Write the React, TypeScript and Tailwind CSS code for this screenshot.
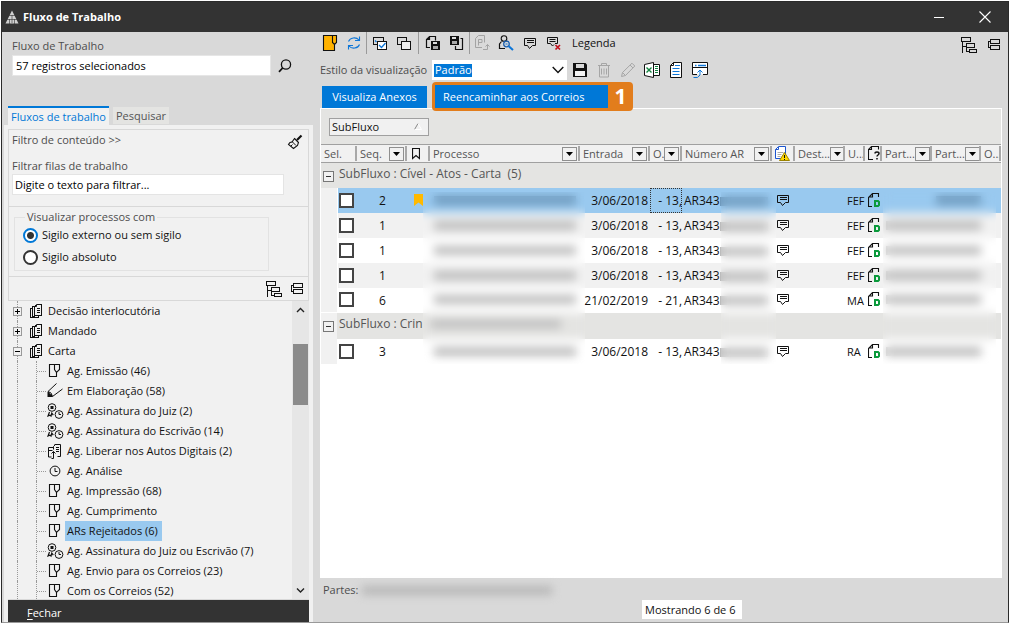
import React from "react";

type IconProps = { className?: string };

function Svg({ children, w = 16, h = 16, className = "" }: { children: React.ReactNode; w?: number; h?: number; className?: string }) {
  return (
    <svg width={w} height={h} viewBox={`0 0 ${w} ${h}`} fill="none" stroke="#111" strokeWidth="1" className={`shrink-0 ${className}`} aria-hidden="true">
      {children}
    </svg>
  );
}

const LogoIcon = () => (
  <Svg w={14} h={14}>
    <path d="M7 0.5L13.5 13.5H0.5Z" fill="#d0d0d0" stroke="none" />
    <path d="M4 5.500h6M2 9.500h11M7 5v8M4.500 9v5M9.500 9v5" stroke="#333" strokeWidth="0.6" />
  </Svg>
);
const SearchIcon = () => (
  <Svg w={14} h={14}>
    <circle cx="8" cy="5.5" r="4.6" strokeWidth="1.3" />
    <path d="M4.6 9L1 12.8" strokeWidth="1.8" />
  </Svg>
);
const BroomIcon = () => (
  <Svg>
    <path d="M14.500 1.500L10 6" strokeWidth="2.200" />
    <path d="M7.500 4.500l4 4-1 3-4 3-5-4 1.500-2 2-.5z" fill="#f1f1f1" strokeWidth="1.100" />
    <path d="M5 7.500l4 4M4 12l1.500-1.500" />
  </Svg>
);
const TreeExpandIcon = () => (
  <Svg w={17} h={16}>
    <path d="M.5 .5h9v4h-9zM5.500 6.500h8v4h-8zM8.500 12.500h7v3h-7zM1.500 4.500v11M1.500 9h4M5.500 10.500v4h3" shapeRendering="crispEdges" />
  </Svg>
);
const TreeCollapseIcon = () => (
  <Svg w={13} h={12}>
    <path d="M2.500 .5h9v4h-9zM2.500 6.500h9v4h-9zM2.500 2.500h-2v6h2" shapeRendering="crispEdges" />
  </Svg>
);
const DocsIcon = () => (
  <Svg w={12} h={14}>
    <path d="M6.500 .5h5v11h-7v-9M2.500 12.500v-10h2M2.500 4.500h-2v9h8v-2M2.500 12.500h2M6.500 4.500h3M6.500 6.500h3M6.500 8.500h3" shapeRendering="crispEdges" />
    <path d="M4.500 2.500l2-2v2h-2" />
  </Svg>
);
const FlagDocIcon = () => (
  <Svg>
    <path d="M9.500 9.500V13.500H2.500V1.500H12.500V6.500L9.500 9.500 7.500 6.500V1.500" strokeWidth="1.100" />
  </Svg>
);
const DraftIcon = () => (
  <Svg>
    <path d="M1 8.500L9.500 .5M15.500 6L5.500 13.500M1 8.500l3 1.500 1.500 3.500" />
    <path d="M.5 8.500L2.500 9.500 3 11l2 .5.500 2.500H.5z" fill="#111" stroke="none" />
  </Svg>
);
const SignClockIcon = () => (
  <Svg w={17}>
    <circle cx="5" cy="4.500" r="3.800" />
    <rect x="3.500" y="3" width="3" height="3" fill="#111" stroke="none" />
    <path d="M2.500 9l-1.500 4 2-.8 1 1 .8-3 1.500 2" strokeWidth="1.200" />
    <circle cx="12" cy="11.500" r="3.900" fill="#f1f1f1" />
    <path d="M12 9v2.500h2" />
  </Svg>
);
const ReleaseIcon = () => (
  <Svg>
    <path d="M6.500 4.500H1.500v9.500h3M7.500 1.500h6v12h-3M6.500 6.500V3.500l2-2M4.500 15.500h2v-7M4.500 10.500l2-2 2 2M9 4.500h3M9 6.500h3M9 8.500h3" />
    <path d="M1.500 7.500h4" />
  </Svg>
);
const ClockIcon = () => (
  <Svg>
    <circle cx="8" cy="8" r="4.900" />
    <path d="M8 5v3.500h2.500" />
  </Svg>
);
const YellowDocIcon = () => (
  <Svg>
    <path d="M12.500 9.500V15.500H1.500V.5H14.500V7.500L12.500 9.500 10.500 7.500V.5" fill="#ffb200" stroke="#111" strokeWidth="1.100" />
  </Svg>
);
const RefreshIcon = () => (
  <Svg>
    <g stroke="#0d76d8" strokeWidth="1.100">
      <path d="M2.500 6.500C4 2.500 10 1.500 13 5M13.500 1.500v4H9" />
      <path d="M13.500 9.500C12 13.500 6 14.500 3 11M2.500 14.500v-4H7" />
    </g>
  </Svg>
);
const CheckAllIcon = () => (
  <Svg>
    <path d="M4.500 9.500h-3v-7h10v3" shapeRendering="crispEdges" />
    <rect x="5.500" y="6.500" width="9" height="8" fill="#fff" shapeRendering="crispEdges" />
    <path d="M3 5.500l1.500 1.500M7 10l2.500 2.500L13.500 8" stroke="#0d76d8" strokeWidth="1.300" />
  </Svg>
);
const CopyIcon = () => (
  <Svg>
    <path d="M4.500 9.500h-3v-7h9v3" shapeRendering="crispEdges" />
    <rect x="5.500" y="6.500" width="9" height="8" fill="#eee" shapeRendering="crispEdges" />
  </Svg>
);
const Floppy = ({ x, y }: { x: number; y: number }) => (
  <g shapeRendering="crispEdges" stroke="none">
    <rect x={x} y={y} width="9" height="9" fill="#111" />
    <rect x={x + 2} y={y + 1} width="4" height="2" fill="#ddd" />
    <rect x={x + 2} y={y + 5} width="5" height="3" fill="#aaa" />
  </g>
);
const DocSaveIcon = () => (
  <Svg>
    <path d="M5 12.500H1.500v-8l3-3h6v4M4.500 1.500v3h-3" fill="none" strokeWidth="1.200" />
    <Floppy x={6} y={6} />
  </Svg>
);
const SaveDocIcon = () => (
  <Svg>
    <Floppy x={1} y={1} />
    <path d="M11.500 3.500h2v11h-7V11" strokeWidth="1.200" />
  </Svg>
);
const PdfIcon = () => (
  <Svg>
    <g stroke="#a3a3a3">
      <path d="M8 12.500H1.500v-9l3-3h6v7M4.500 10.500V4.500h3.500v3h-3.500M9 14.500h4.500v-5M11.500 11.500l2-2 2 2" />
    </g>
  </Svg>
);
const PersonSearchIcon = () => (
  <Svg>
    <circle cx="6" cy="3.500" r="2.800" strokeWidth="1.100" />
    <path d="M7 13.500H1.500V9l2-2.500M8.500 6l1 .5" strokeWidth="1.200" />
    <circle cx="8.500" cy="9" r="2.800" stroke="#1c5fae" strokeWidth="1.300" />
    <path d="M10.500 11l4.500 4" stroke="#0d76d8" strokeWidth="2" />
    <path d="M7.500 9h2" stroke="#0d76d8" />
  </Svg>
);
const CommentIcon = ({ className = "" }: IconProps) => (
  <Svg w={13} h={13} className={className}>
    <path d="M.5 1.500h11v7H8.500l-3 3-2-3h-3zM3 3.500h7M3 5.500h7" />
  </Svg>
);
const CommentDeleteIcon = () => (
  <Svg>
    <path d="M1.500 2.500h10v6H9M4.500 8.500h-3v-6M3.500 4.500h6M3.500 6.500h6M4.500 8.500l2 2.500 1.500-1.500" />
    <path d="M9.500 10l4.500 4.500M14 10l-4.500 4.500" stroke="#c1121f" strokeWidth="1.700" />
  </Svg>
);
const SaveIcon = () => (
  <Svg>
    <path d="M1 1h12.500l1.500 1.500V15H1z" fill="#111" stroke="none" />
    <rect x="4" y="2" width="8" height="4" fill="#d9d9d9" stroke="none" />
    <rect x="3" y="9" width="10" height="5" fill="#f4f4f4" stroke="none" />
  </Svg>
);
const TrashIcon = () => (
  <Svg>
    <path d="M2 3.500h12M5.500 3V1.500h5V3M3.500 4v11h9V4M5.500 6.500v6M8 6.500v6M10.500 6.500v6" stroke="#a6a6a6" />
  </Svg>
);
const PencilIcon = () => (
  <Svg>
    <path d="M1.500 14.500l1-4L12 1.200l2.800 2.800L5.500 13.500zM2.500 10.500l3 3M10 3l3 3" stroke="#a6a6a6" />
  </Svg>
);
const ExcelIcon = () => (
  <Svg>
    <path d="M9.500 2.500h6v11h-6" fill="#fff" />
    <path d="M.5 2.500l9-2v15l-9-2z" fill="#fff" />
    <path d="M2.500 5.500l5 5M7.500 5.500l-5 5" stroke="#12843f" strokeWidth="1.400" />
    <path d="M11 4.500h3M11 6.500h3M11 8.500h3M11 10.500h3" stroke="#12843f" />
  </Svg>
);
const ReportIcon = () => (
  <Svg>
    <path d="M2.500 3.500l3-3h8v15h-11z" fill="#fff" />
    <path d="M5.500 .5v3h-3" />
    <path d="M7 3.500h5M4.500 6.500h7M4.500 9.500h7M4.500 12.500h7" stroke="#0d76d8" />
  </Svg>
);
const WindowUploadIcon = () => (
  <Svg>
    <path d="M5 12.500H.5V.5h15v12H11" fill="#fff" />
    <path d="M.5 5.500h15" />
    <path d="M3 3.500h1.500M6 3.500h8" stroke="#0d76d8" strokeWidth="1.500" />
    <path d="M1.500 15.500h4l2.500-2.500V8.500M5.500 10.500L8 8l2.500 2.500" stroke="#0d76d8" />
  </Svg>
);
const BookmarkOutline = () => (
  <Svg w={8} h={13}>
    <path d="M.5 1.500h7v10L4 8.500.5 11.500z" strokeWidth="1.200" />
  </Svg>
);
const DocWarnIcon = () => (
  <Svg w={15}>
    <path d="M.5 3.500l3-3h7v12H.5z" fill="#fff" stroke="#1d56cf" />
    <path d="M3.500 1v2.500H.5" stroke="#1d56cf" />
    <path d="M2.500 6.500h6M2.500 8.500h4M2.500 10.500h3" stroke="#aaa" />
    <path d="M9.500 6.500l5 8h-10z" fill="#ffd800" stroke="#9c8300" />
    <path d="M9.500 9v3M9.500 13v1" />
  </Svg>
);
const DocQuestionIcon = () => (
  <Svg w={13} h={15}>
    <path d="M5 13.500H.5v-10l3-3h7v3M3.500 .5v3H.5" strokeWidth="1.100" />
    <path d="M7 7.500c0-2 4-2 4 0 0 1.500-2 1.500-2 3M9 12v1.500" strokeWidth="1.500" />
  </Svg>
);
const DocDIcon = () => (
  <Svg w={13} h={15}>
    <path d="M4 13.500H.5V4.500L4.500 .5h6V4M4.500 .5v3.500H.5" strokeWidth="1.100" />
    <path d="M7 8h3l1 1v3l-1 1H7z" stroke="#0b9a3c" strokeWidth="2" />
  </Svg>
);

function IconButton({ label, children }: { label: string; children: React.ReactNode }) {
  return (
    <button type="button" aria-label={label} className="flex h-5 w-6 items-center justify-center">
      {children}
    </button>
  );
}

function TitleBar() {
  return (
    <header className="flex h-[30px] shrink-0 items-center bg-[#333] text-white">
      <div className="ml-[3px] flex items-center gap-1">
        <LogoIcon />
        <h1 className="text-[11px] font-bold">Fluxo de Trabalho</h1>
      </div>
      <div className="ml-auto flex items-center">
        <button type="button" aria-label="Minimizar" className="flex h-[30px] w-[46px] items-center justify-center">
          <span className="h-px w-2.5 bg-white" />
        </button>
        <button type="button" aria-label="Fechar janela" className="flex h-[30px] w-[46px] items-center justify-center">
          <svg width="12" height="12" viewBox="0 0 12 12" stroke="#fff" strokeWidth="1.100" aria-hidden="true">
            <path d="M.5 .5l11 11M11.500 .5l-11 11" />
          </svg>
        </button>
      </div>
    </header>
  );
}

type Node = { label: string; level: 1 | 2; icon: () => React.ReactElement; open?: boolean; selected?: boolean };

const nodes: Node[] = [
  { label: "Decisão interlocutória", level: 1, icon: DocsIcon },
  { label: "Mandado", level: 1, icon: DocsIcon },
  { label: "Carta", level: 1, icon: DocsIcon, open: true },
  { label: "Ag. Emissão (46)", level: 2, icon: FlagDocIcon },
  { label: "Em Elaboração (58)", level: 2, icon: DraftIcon },
  { label: "Ag. Assinatura do Juiz (2)", level: 2, icon: SignClockIcon },
  { label: "Ag. Assinatura do Escrivão (14)", level: 2, icon: SignClockIcon },
  { label: "Ag. Liberar nos Autos Digitais (2)", level: 2, icon: ReleaseIcon },
  { label: "Ag. Análise", level: 2, icon: ClockIcon },
  { label: "Ag. Impressão (68)", level: 2, icon: FlagDocIcon },
  { label: "Ag. Cumprimento", level: 2, icon: FlagDocIcon },
  { label: "ARs Rejeitados (6)", level: 2, icon: FlagDocIcon, selected: true },
  { label: "Ag. Assinatura do Juiz ou Escrivão (7)", level: 2, icon: SignClockIcon },
  { label: "Ag. Envio para os Correios (23)", level: 2, icon: FlagDocIcon },
  { label: "Com os Correios (52)", level: 2, icon: FlagDocIcon },
];

function TreeRow({ node }: { node: Node }) {
  const Icon = node.icon;
  return (
    <li className="flex h-5 items-center">
      <span className="relative flex h-5 w-[19px] items-center justify-center">
        <span className="absolute inset-y-0 left-[9px] border-l border-dotted border-[#999]" />
        {node.level === 1 && (
          <button type="button" aria-label={node.open ? "Recolher" : "Expandir"} className="relative flex size-[9px] items-center justify-center border border-[#999] bg-[#f1f1f1]">
            <span className="absolute h-px w-[5px] bg-black" />
            {!node.open && <span className="absolute h-[5px] w-px bg-black" />}
          </button>
        )}
      </span>
      {node.level === 1 ? (
        <span className="flex w-[18px] items-center justify-center">
          <Icon />
        </span>
      ) : (
        <>
          <span className="ml-[9px] flex h-5 w-2.5 items-center border-l border-dotted border-[#999]">
            <span className="w-[9px] border-t border-dotted border-[#999]" />
          </span>
          <span className="flex w-[18px] items-center justify-center">
            <Icon />
          </span>
        </>
      )}
      <span className={`ml-px flex h-5 items-center whitespace-nowrap px-0.5 ${node.selected ? "bg-[#99c9ef] pr-1" : ""}`}>{node.label}</span>
    </li>
  );
}

function Sidebar() {
  return (
    <aside className="flex w-[311px] shrink-0 flex-col">
      <div className="px-2.5 pt-1.5">
        <label htmlFor="fluxo" className="block h-[17px] leading-4 text-[#4d4d4d]">Fluxo de Trabalho</label>
        <div className="flex items-center">
          <input id="fluxo" defaultValue="57 registros selecionados" className="h-[21px] w-[259px] border border-[#e6e6e6] bg-white px-[3px] text-black" />
          <button type="button" aria-label="Buscar" className="ml-[7px]">
            <SearchIcon />
          </button>
        </div>
      </div>
      <div className="mt-[30px] flex items-end gap-1 pl-1.5" role="tablist">
        <button type="button" role="tab" aria-selected="true" className="h-[19px] w-[101px] border-t-2 border-[#0078d7] bg-[#f1f1f1] leading-[14px] text-[#0078d7]">
          Fluxos de trabalho
        </button>
        <button type="button" role="tab" aria-selected="false" className="mb-px h-[17px] w-14 bg-[#e4e4e2] text-[#555]">
          Pesquisar
        </button>
      </div>
      <div className="ml-0.5 flex min-h-0 flex-1 flex-col bg-[#f1f1f1] pl-1 pr-1 pt-1">
        <section className="h-[78px] border border-[#d8d8d8] px-[3px] text-[#4d4d4d]">
          <div className="flex items-center justify-between pr-0.5">
            <button type="button" className="h-5">Filtro de conteúdo &gt;&gt;</button>
            <button type="button" aria-label="Limpar filtro" className="mt-1">
              <BroomIcon />
            </button>
          </div>
          <label htmlFor="filas" className="mt-2 block h-4 leading-4">Filtrar filas de trabalho</label>
          <input id="filas" defaultValue="Digite o texto para filtrar..." className="block h-[21px] w-[272px] border border-[#e4e4e4] bg-white px-0.5 text-black" />
        </section>
        <section className="h-[70px] border-x border-b border-[#d8d8d8] px-[5px] pt-[3px]">
          <fieldset className="h-[61px] w-[255px] border border-[#e2e2e2] pl-2">
            <legend className="ml-0.5 h-3.5 px-0.5 leading-[14px] text-[#4d4d4d]">Visualizar processos com</legend>
            <label className="flex h-[22px] items-center gap-1">
              <input type="radio" name="sigilo" defaultChecked className="size-[15px] appearance-none rounded-full border-2 border-[#0078d7] bg-white bg-[radial-gradient(circle,#333_3px,#fff_4px)]" />
              Sigilo externo ou sem sigilo
            </label>
            <label className="flex h-[22px] items-center gap-1">
              <input type="radio" name="sigilo" className="size-[15px] appearance-none rounded-full border-2 border-[#333] bg-white" />
              Sigilo absoluto
            </label>
          </fieldset>
        </section>
        <div className="flex h-6 items-center justify-end gap-2 border-x border-b border-[#d8d8d8] pr-1">
          <button type="button" aria-label="Expandir tudo"><TreeExpandIcon /></button>
          <button type="button" aria-label="Recolher tudo"><TreeCollapseIcon /></button>
        </div>
        <div className="flex min-h-0 flex-1 overflow-hidden border-b border-[#d8d8d8]">
          <ul className="flex-1 overflow-hidden">
            {nodes.map((n) => (
              <TreeRow key={n.label} node={n} />
            ))}
          </ul>
          <div className="flex w-[17px] flex-col items-center justify-between bg-[#e6e6e6]">
            <div className="flex w-full flex-col items-center">
              <svg width="9" height="18" viewBox="0 0 9 18" fill="none" stroke="#222" strokeWidth="1.400" aria-hidden="true"><path d="M1 11l3.500-3.500L8 11" /></svg>
              <div className="mt-[25px] h-[61px] w-[15px] bg-[#8b8b8b]" />
            </div>
            <svg width="9" height="18" viewBox="0 0 9 18" fill="none" stroke="#222" strokeWidth="1.400" aria-hidden="true"><path d="M1 7.500L4.500 11 8 7.500" /></svg>
          </div>
        </div>
        <button type="button" className="h-[22px] shrink-0 bg-[#333] pl-[19px] pt-1 text-left text-white">
          <span className="underline underline-offset-2">F</span>echar
        </button>
      </div>
    </aside>
  );
}

function Toolbars() {
  return (
    <div className="relative z-10 flex items-start pl-[5px] pr-[7px]">
      <div>
        <div className="flex h-[22px] items-center">
          <IconButton label="Abrir pasta"><YellowDocIcon /></IconButton>
          <IconButton label="Atualizar"><RefreshIcon /></IconButton>
          <div className="mr-px h-[22px] w-px bg-[#9a9a9a]" />
          <IconButton label="Selecionar todos"><CheckAllIcon /></IconButton>
          <IconButton label="Desmarcar todos"><CopyIcon /></IconButton>
          <div className="mx-0.5 h-[22px] w-px bg-[#9a9a9a]" />
          <IconButton label="Salvar documento"><DocSaveIcon /></IconButton>
          <IconButton label="Salvar como"><SaveDocIcon /></IconButton>
          <div className="h-[22px] w-px bg-[#9a9a9a]" />
          <IconButton label="Exportar PDF"><PdfIcon /></IconButton>
          <IconButton label="Consultar parte"><PersonSearchIcon /></IconButton>
          <IconButton label="Comentar"><CommentIcon /></IconButton>
          <IconButton label="Excluir comentário"><CommentDeleteIcon /></IconButton>
          <button type="button" className="ml-1.5 text-[11px] text-[#111]">Legenda</button>
        </div>
        <div className="mt-1.5 flex h-5 items-center">
          <label htmlFor="estilo" className="w-[114px] whitespace-nowrap pl-0.5 text-[#4d4d4d]">Estilo da visualização</label>
          <div className="relative">
            <select id="estilo" className="block h-5 w-[135px] appearance-none bg-white bg-[linear-gradient(#0078d7,#0078d7)] bg-[length:38px_13px] bg-[position:2px_4px] bg-no-repeat px-[3px] text-white">
              <option>Padrão</option>
            </select>
            <svg width="12" height="8" viewBox="0 0 12 8" fill="none" stroke="#111" strokeWidth="1.400" className="pointer-events-none absolute right-[3px] top-1.5" aria-hidden="true"><path d="M.7 1L6 6.500 11.300 1" /></svg>
          </div>
          <div className="ml-px flex">
            <IconButton label="Salvar estilo"><SaveIcon /></IconButton>
            <IconButton label="Excluir estilo"><TrashIcon /></IconButton>
            <IconButton label="Editar estilo"><PencilIcon /></IconButton>
            <IconButton label="Exportar Excel"><ExcelIcon /></IconButton>
            <IconButton label="Relatório"><ReportIcon /></IconButton>
            <IconButton label="Enviar"><WindowUploadIcon /></IconButton>
          </div>
        </div>
        <div className="mt-[5px] flex h-[23px] items-center pl-1">
          <button type="button" className="h-[22px] w-[105px] bg-[#0078d7] text-white">Visualiza Anexos</button>
          <div className="ml-[5px] flex h-[29px] shrink-0 rounded bg-[#e27d1c] p-[3px] pr-0">
            <button type="button" className="h-[23px] w-[173px] bg-[#0078d7] pl-2 text-left text-white">Reencaminhar aos Correios</button>
            <span className="w-[25px] text-center text-[21px] font-bold leading-[22px] text-white">1</span>
          </div>
        </div>
      </div>
      <div className="ml-auto mt-[5px] flex items-center gap-2.5">
        <button type="button" aria-label="Expandir grupos"><TreeExpandIcon /></button>
        <button type="button" aria-label="Recolher grupos"><TreeCollapseIcon /></button>
      </div>
    </div>
  );
}

function Head({ children, filter, span }: { children: React.ReactNode; filter?: string; span?: number }) {
  return (
    <th colSpan={span} className="overflow-hidden border-y border-[#a0a0a0] p-0 text-left font-normal">
      <div className="flex h-[15px] items-center justify-between overflow-hidden border-r-2 border-[#a8a8a8] pl-[3px]">
        <span className="flex items-center justify-center whitespace-nowrap">{children}</span>
        {filter && (
          <button type="button" aria-label={filter} className="mr-px flex h-3.5 w-[15px] shrink-0 items-center justify-center border border-[#8f8f8f] bg-[#f1f1f1]">
            <svg width="7" height="4" viewBox="0 0 7 4" aria-hidden="true"><path d="M0 0h7L3.500 4z" fill="#000" /></svg>
          </button>
        )}
      </div>
    </th>
  );
}

type Row = { seq: number; date: string; due: string; user: string; tone: string; selected?: boolean };

const civil: Row[] = [
  { seq: 2, date: "3/06/2018", due: "- 13,", user: "FEF", tone: "bg-[#99c9ef]", selected: true },
  { seq: 1, date: "3/06/2018", due: "- 13,", user: "FEF", tone: "bg-[#f1f1f1]" },
  { seq: 1, date: "3/06/2018", due: "- 13,", user: "FEF", tone: "bg-white" },
  { seq: 1, date: "3/06/2018", due: "- 13,", user: "FEF", tone: "bg-[#f1f1f1]" },
  { seq: 6, date: "21/02/2019", due: "- 21,", user: "MA", tone: "bg-white" },
];
const criminal: Row[] = [{ seq: 3, date: "3/06/2018", due: "- 13,", user: "RA", tone: "bg-white" }];

function DataRow({ row }: { row: Row }) {
  const bar = row.selected ? "bg-[#6f9abd]" : "bg-[#bcbcbc]";
  return (
    <tr className={`h-[25px] text-[12px] text-[#111] ${row.tone}`}>
      <td className="border-r border-white bg-[#f1f1f1] p-0" />
      <td className="p-0 pl-px align-middle">
        <input type="checkbox" aria-label={`Selecionar processo ${row.seq}`} className="block size-[15px] appearance-none border-2 border-[#444] bg-white" />
      </td>
      <td className="p-0 pl-px pt-0.5 text-center">{row.seq}</td>
      <td className="p-0 pl-[7px] align-top">
        {row.selected && (
          <svg width="9" height="12" viewBox="0 0 9 12" className="mt-1.5" aria-hidden="true"><path d="M0 0h9v12L4.500 8.500 0 12z" fill="#ffb900" /></svg>
        )}
      </td>
      <td className="p-0 pl-1 pr-1">
        <div className={`h-[9px] w-full ${bar}`} />
      </td>
      <td className="whitespace-nowrap p-0 pr-0.5 pt-0.5 text-right">{row.date}</td>
      <td className={`whitespace-nowrap p-0 pt-0.5 text-right ${row.selected ? "outline-1 -outline-offset-1 outline-dotted outline-[#333]" : ""}`}>{row.due}</td>
      <td className="p-0 pl-0.5 pt-0.5">
        <div className="flex items-center whitespace-nowrap">
          <span className="shrink-0">AR343</span>
          <span className={`h-[9px] w-12 ${bar}`} />
        </div>
      </td>
      <td className="p-0 pl-[5px]"><CommentIcon /></td>
      <td className="p-0" />
      <td className="whitespace-nowrap p-0 pl-0.5 pt-0.5 text-[11px]">{row.user}</td>
      <td className="p-0 pl-[3px]"><DocDIcon /></td>
      <td className="p-0 pl-1">{!row.selected && <div className={`h-[9px] w-full ${bar}`} />}</td>
      <td className="p-0"><div className={`h-[9px] ${row.selected ? "ml-1" : ""} ${bar}`} /></td>
      <td className="p-0" />
    </tr>
  );
}

function GroupRow({ label, gutter, masked }: { label: string; gutter: string; masked?: boolean }) {
  return (
    <tr className={`bg-[#e4e4e2] text-[#555] ${masked ? "h-[26px] border-t border-white" : "h-[25px]"}`}>
      <td className={`p-0 pl-0.5 ${gutter}`}>
        <button type="button" aria-label="Recolher grupo" className="mt-0.5 flex size-[11px] items-center justify-center border border-[#777] bg-[#f1f1f1]">
          <span className="h-px w-[5px] bg-[#333]" />
        </button>
      </td>
      <td colSpan={14} className="p-0 pl-0.5 align-top text-[12px]">
        <div className="flex h-[22px] items-center gap-2 whitespace-pre">
          {label}
          {masked && <span className="h-2 w-[130px] bg-[#bdbdbd]" />}
        </div>
      </td>
    </tr>
  );
}

function Grid() {
  return (
    <div className="ml-[7px] mr-1.5 flex min-h-0 flex-1 flex-col border border-white bg-white">
      <div className="flex h-[35px] shrink-0 items-center bg-[#e4e4e2] pl-2">
        <button type="button" className="flex h-[18px] w-[100px] items-center justify-between border border-[#a0a0a0] bg-[#f1f1f1] pl-0.5 pr-1.5 text-[#111]">
          SubFluxo
          <svg width="8" height="7" viewBox="0 0 8 7" fill="none" aria-hidden="true"><path d="M4 .5L.5 6.500" stroke="#888" /><path d="M4 .5l3.500 6h-7" stroke="#fff" /></svg>
        </button>
      </div>
      <div className="relative">
        <table className="w-full table-fixed border-collapse">
          <colgroup>
            <col className="w-4" />
            <col className="w-5" />
            <col className="w-[50px]" />
            <col className="w-[23px]" />
            <col />
            <col className="w-[70px]" />
            <col className="w-8" />
            <col className="w-[90px]" />
            <col className="w-[23px]" />
            <col className="w-[50px]" />
            <col className="w-5" />
            <col className="w-[17px]" />
            <col className="w-[50px]" />
            <col className="w-[49px]" />
            <col className="w-5" />
          </colgroup>
          <thead>
            <tr className="h-[18px] bg-[#f1f1f1] text-[#555]">
              <Head span={2}>Sel.</Head>
              <Head filter="Filtrar Seq.">Seq.</Head>
              <Head><span className="ml-0.5"><BookmarkOutline /></span></Head>
              <Head filter="Filtrar Processo">Processo</Head>
              <Head filter="Filtrar Entrada">Entrada</Head>
              <Head filter="Filtrar prazo">O.</Head>
              <Head filter="Filtrar Número AR">Número AR</Head>
              <Head><DocWarnIcon /></Head>
              <Head filter="Filtrar destinatário">Dest...</Head>
              <Head>U...</Head>
              <Head><DocQuestionIcon /></Head>
              <Head filter="Filtrar parte ativa">Part...</Head>
              <Head filter="Filtrar parte passiva">Part...</Head>
              <Head>O...</Head>
            </tr>
          </thead>
          <tbody>
            <GroupRow label="SubFluxo : Cível - Atos - Carta  (5)" gutter="" />
            {civil.map((r, i) => (
              <DataRow key={i} row={r} />
            ))}
            <GroupRow label="SubFluxo : Crin" gutter="bg-[#f1f1f1]" masked />
            {criminal.map((r, i) => (
              <DataRow key={i} row={r} />
            ))}
          </tbody>
        </table>
        <div className="absolute bottom-0 left-[102px] right-[416px] top-12 backdrop-blur-[5px]" />
        <div className="absolute bottom-0 right-[225px] top-12 w-[55px] backdrop-blur-[5px]" />
        <div className="absolute bottom-0 right-[5px] top-12 w-[113px] backdrop-blur-[5px]" />
      </div>
    </div>
  );
}

export default function App() {
  return (
    <div className="h-screen bg-white pb-px pr-px pt-px font-['Open_Sans',sans-serif] text-[11px] leading-4 text-[#111]">
      <div className="ml-px flex h-full flex-col overflow-hidden border border-[#2b2b2b] border-b-[#999] bg-[#d9d9d9]">
        <TitleBar />
        <div className="flex min-h-0 flex-1">
          <Sidebar />
          <main className="flex min-w-0 flex-1 flex-col">
            <Toolbars />
            <Grid />
            <footer className="h-[44px] shrink-0 pl-2.5 pt-1">
              <div className="flex h-4 items-center text-[#4d4d4d]">
                Partes:
                <span className="ml-1 h-[9px] w-[190px] bg-[#b8b8b8] blur-[4px]" />
              </div>
              <div className="ml-[319px] mt-0.5 flex h-[19px] w-[100px] items-center bg-white pl-[3px] text-[#111]">Mostrando 6 de 6</div>
            </footer>
          </main>
        </div>
      </div>
    </div>
  );
}
